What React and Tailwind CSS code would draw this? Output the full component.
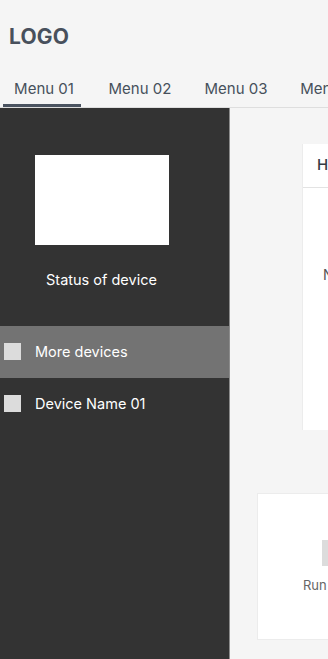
import React from 'react';

const tabs = ['Menu 01', 'Menu 02', 'Menu 03', 'Menu 04'];

export default function App() {
  return (
    <div className="w-[328px] h-[659px] overflow-hidden bg-[#f5f5f5] flex flex-col" style={{ fontFamily: 'Inter, "Noto Sans", sans-serif' }}>
      {/* Header */}
      <div className="h-[72px] flex items-center pl-[9px] pt-[1px]">
        <span className="text-[21px] font-bold text-[#48505c] tracking-[0.2px]">LOGO</span>
      </div>

      {/* Tabs */}
      <div className="flex gap-[18px] pl-[3px] border-b border-[#dedede] whitespace-nowrap">
        {tabs.map((t, i) => (
          <div
            key={t}
            className={`w-[78px] shrink-0 h-[35px] flex items-center justify-center text-[15px] text-[#46505b] pl-[4px] ${i === 0 ? 'border-b-[3px] border-[#4a5360] pt-[3px]' : ''}`}
          >
            {t}
          </div>
        ))}
      </div>

      <div className="flex flex-1 min-h-0">
        {/* Sidebar */}
        <div className="w-[230px] shrink-0 bg-[#333333] border-r border-[#8c8c8c] flex flex-col">
          <div className="flex flex-col items-center pt-[47px] pr-[26px]">
            <div className="w-[134px] h-[90px] bg-white" />
            <p className="text-[14.5px] text-white mt-[24px]">Status of device</p>
          </div>
          <div className="mt-[35px] h-[52px] bg-[#737373] flex items-center pl-[4px] gap-[14px]">
            <div className="w-[17px] h-[17px] bg-[#dcdcdc]" />
            <span className="text-[14.5px] text-white">More devices</span>
          </div>
          <div className="h-[52px] flex items-center pl-[4px] gap-[14px]">
            <div className="w-[17px] h-[17px] bg-[#dcdcdc]" />
            <span className="text-[14.5px] text-white">Device Name 01</span>
          </div>
        </div>

        {/* Content */}
        <div className="flex-1 min-w-0 overflow-hidden">
          <div className="flex flex-col pt-[36px]">
            <div className="ml-[72px] w-[200px] h-[286px] bg-white border-l border-[#ececec] flex flex-col">
              <div className="h-[44px] flex items-center pl-[14px] border-b border-[#e3e3e3]">
                <span className="text-[15px] font-medium text-[#333a44]">Header</span>
              </div>
              <div className="pl-[20px] pt-[76px] text-[14px] text-[#555]">No data</div>
            </div>
            <div className="ml-[27px] mt-[63px] w-[240px] h-[147px] bg-white border border-[#ececec] flex flex-col">
              <div className="ml-[64px] mt-[46px] w-[40px] h-[26px] bg-[#dcdcdc]" />
              <div className="ml-[45px] mt-[10px] text-[13px] text-[#666]">Run</div>
            </div>
          </div>
        </div>
      </div>
    </div>
  );
}
